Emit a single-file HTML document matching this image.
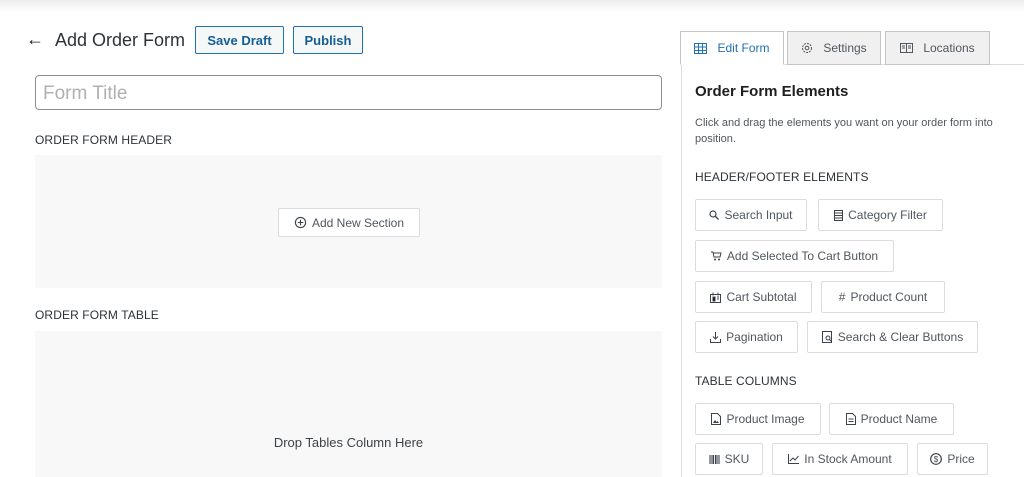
<!DOCTYPE html>
<html><head><meta charset="utf-8"><style>
*{box-sizing:border-box;margin:0;padding:0}
body{width:1024px;height:477px;overflow:hidden;background:#fff;font-family:"Liberation Sans",sans-serif;color:#1e1e1e;position:relative}
.a{position:absolute}
.topsh{left:0;top:0;width:1024px;height:12px;background:linear-gradient(#ececec,#fff)}
.btn{position:absolute;border:1px solid #2271b1;background:#f6f7f7;color:#135e96;font-weight:bold;font-size:13px;border-radius:2px;display:flex;align-items:center;justify-content:center}
.lbl{position:absolute;font-size:12px;color:#2c3338;letter-spacing:.1px}
.box{position:absolute;background:#f8f8f8;left:35px;width:627px}
.el{position:absolute;border:1px solid #dcdcde;background:#fff;font-size:12px;color:#50575e;display:flex;align-items:center;justify-content:center;height:32px;border-radius:2px}
.el svg{margin-right:5px}
.tab{position:absolute;top:31px;height:34px;border:1px solid #c3c4c7;background:#f0f0f1;font-size:12px;color:#50575e;display:flex;align-items:center;justify-content:center}
.tab svg{margin-right:10px}
</style></head><body>
<div class="a topsh"></div>
<div class="a" style="left:26px;top:29px;font-size:18px;color:#1e1e1e">←</div>
<div class="a" style="left:55px;top:30px;font-size:18px;color:#2c3338">Add Order Form</div>
<div class="btn" style="left:195px;top:26px;width:89px;height:28px">Save Draft</div>
<div class="btn" style="left:293px;top:26px;width:70px;height:28px">Publish</div>
<div class="a" style="left:35px;top:75px;width:627px;height:35px;border:1px solid #8c8f94;border-radius:4px;font-size:19px;color:#b0b0b0;padding:7px 0 0 7px">Form Title</div>
<div class="lbl" style="left:35px;top:133px">ORDER FORM HEADER</div>
<div class="box" style="top:155px;height:133px"></div>
<div class="el" style="left:278px;top:208px;width:142px;height:29px;font-size:12px"><svg width="13" height="13" viewBox="0 0 14 14"><circle cx="7" cy="7" r="5.5" fill="none" stroke="#3c434a" stroke-width="1.2"/><path d="M7 4v6M4 7h6" stroke="#3c434a" stroke-width="1.2"/></svg>Add New Section</div>
<div class="lbl" style="left:35px;top:308px">ORDER FORM TABLE</div>
<div class="box" style="top:331px;height:146px"></div>
<div class="a" style="left:35px;width:627px;top:435px;text-align:center;font-size:13px;color:#3c434a">Drop Tables Column Here</div>

<div class="a" style="left:681px;top:64px;width:343px;height:413px;border-left:1px solid #dcdcde;border-top:1px solid #dcdcde"></div>
<div class="tab" style="left:680px;width:104px;background:#fff;border-bottom-color:#fff;color:#2271b1"><svg width="13" height="11" viewBox="0 0 13 11"><rect x=".5" y=".5" width="12" height="10" fill="none" stroke="#2271b1"/><path d="M.5 4h12M.5 7.5h12M4.5 .5v10M8.5 .5v10" stroke="#2271b1"/></svg>Edit Form</div>
<div class="tab" style="left:787px;width:94px"><svg width="12" height="12" viewBox="0 0 12 12"><circle cx="6" cy="6" r="4.5" fill="none" stroke="#50575e" stroke-dasharray="2 1"/><circle cx="6" cy="6" r="1.8" fill="none" stroke="#50575e"/></svg>Settings</div>
<div class="tab" style="left:885px;width:105px"><svg width="13" height="10" viewBox="0 0 13 10"><rect x=".5" y=".5" width="12" height="9" fill="none" stroke="#50575e"/><path d="M6.5 .5v9M2 3h3M2 5h3M8 3h3M8 5h3" stroke="#50575e"/></svg>Locations</div>

<div class="a" style="left:695px;top:83px;font-size:15px;font-weight:bold;color:#1e1e1e">Order Form Elements</div>
<div class="a" style="left:695px;top:115px;font-size:11px;color:#50575e;line-height:16px;width:320px">Click and drag the elements you want on your order form into position.</div>
<div class="lbl" style="left:695px;top:170px">HEADER/FOOTER ELEMENTS</div>
<div class="el" style="left:695px;top:199px;width:112px"><svg width="10" height="10" viewBox="0 0 10 10"><circle cx="4" cy="4" r="3" fill="none" stroke="#3c434a" stroke-width="1.2"/><path d="M6 6l3.5 3.5" stroke="#3c434a" stroke-width="1.3"/></svg>Search Input</div>
<div class="el" style="left:818px;top:199px;width:125px"><svg width="9" height="11" viewBox="0 0 9 11"><rect x=".5" y=".5" width="8" height="10" fill="none" stroke="#3c434a"/><path d="M.5 3h8M.5 5.5h8M.5 8h8" stroke="#3c434a"/></svg>Category Filter</div>
<div class="el" style="left:695px;top:240px;width:199px"><svg width="11" height="10" viewBox="0 0 11 10"><path d="M0 1h2l1 5h6l1-4H2.5" fill="none" stroke="#3c434a"/><circle cx="4" cy="8.5" r="1" fill="#3c434a"/><circle cx="8" cy="8.5" r="1" fill="#3c434a"/></svg>Add Selected To Cart Button</div>
<div class="el" style="left:695px;top:281px;width:117px"><svg width="11" height="11" viewBox="0 0 11 11"><rect x=".5" y="2.5" width="10" height="8" fill="none" stroke="#3c434a"/><path d="M3 .5v3M8 .5v3M3 5h2v4H3zM7 5h2M7 7h2" stroke="#3c434a"/></svg>Cart Subtotal</div>
<div class="el" style="left:821px;top:281px;width:124px"><span style="margin-right:5px">#</span>Product Count</div>
<div class="el" style="left:695px;top:321px;width:103px"><svg width="11" height="11" viewBox="0 0 11 11"><path d="M5.5 0v7M3 4.5l2.5 2.5 2.5-2.5M.5 7v3.5h10V7" fill="none" stroke="#3c434a"/></svg>Pagination</div>
<div class="el" style="left:807px;top:321px;width:171px"><svg width="11" height="12" viewBox="0 0 11 12"><rect x=".5" y=".5" width="9" height="11" fill="none" stroke="#3c434a"/><circle cx="6" cy="7" r="2" fill="none" stroke="#3c434a"/><path d="M7.5 8.5l2 2" stroke="#3c434a"/></svg>Search &amp; Clear Buttons</div>
<div class="lbl" style="left:695px;top:374px">TABLE COLUMNS</div>
<div class="el" style="left:695px;top:403px;width:126px"><svg width="10" height="12" viewBox="0 0 10 12"><path d="M.5.5h6l3 3v8H.5z" fill="none" stroke="#3c434a"/><path d="M2 10l2-3 1.5 2 1-1 1.5 2z" fill="#3c434a"/></svg>Product Image</div>
<div class="el" style="left:829px;top:403px;width:125px"><svg width="10" height="12" viewBox="0 0 10 12"><path d="M.5.5h6l3 3v8H.5z" fill="none" stroke="#3c434a"/><path d="M2.5 6h5M2.5 8.5h5" stroke="#3c434a"/></svg>Product Name</div>
<div class="el" style="left:695px;top:443px;width:68px"><svg width="11" height="9" viewBox="0 0 11 9"><path d="M1 0v9M3 0v9M4.5 0v9M6.5 0v9M8 0v9M10 0v9" stroke="#3c434a" stroke-width="1.1"/></svg>SKU</div>
<div class="el" style="left:772px;top:443px;width:136px"><svg width="11" height="10" viewBox="0 0 11 10"><path d="M.5 0v9.5H11M2 7l3-3 2 2 3.5-4" fill="none" stroke="#3c434a"/></svg>In Stock Amount</div>
<div class="el" style="left:917px;top:443px;width:71px"><svg width="12" height="12" viewBox="0 0 12 12"><circle cx="6" cy="6" r="5.3" fill="none" stroke="#3c434a" stroke-width="1.2"/><text x="6" y="9" font-size="8" text-anchor="middle" fill="#3c434a" font-family="Liberation Sans">$</text></svg>Price</div>
</body></html>
